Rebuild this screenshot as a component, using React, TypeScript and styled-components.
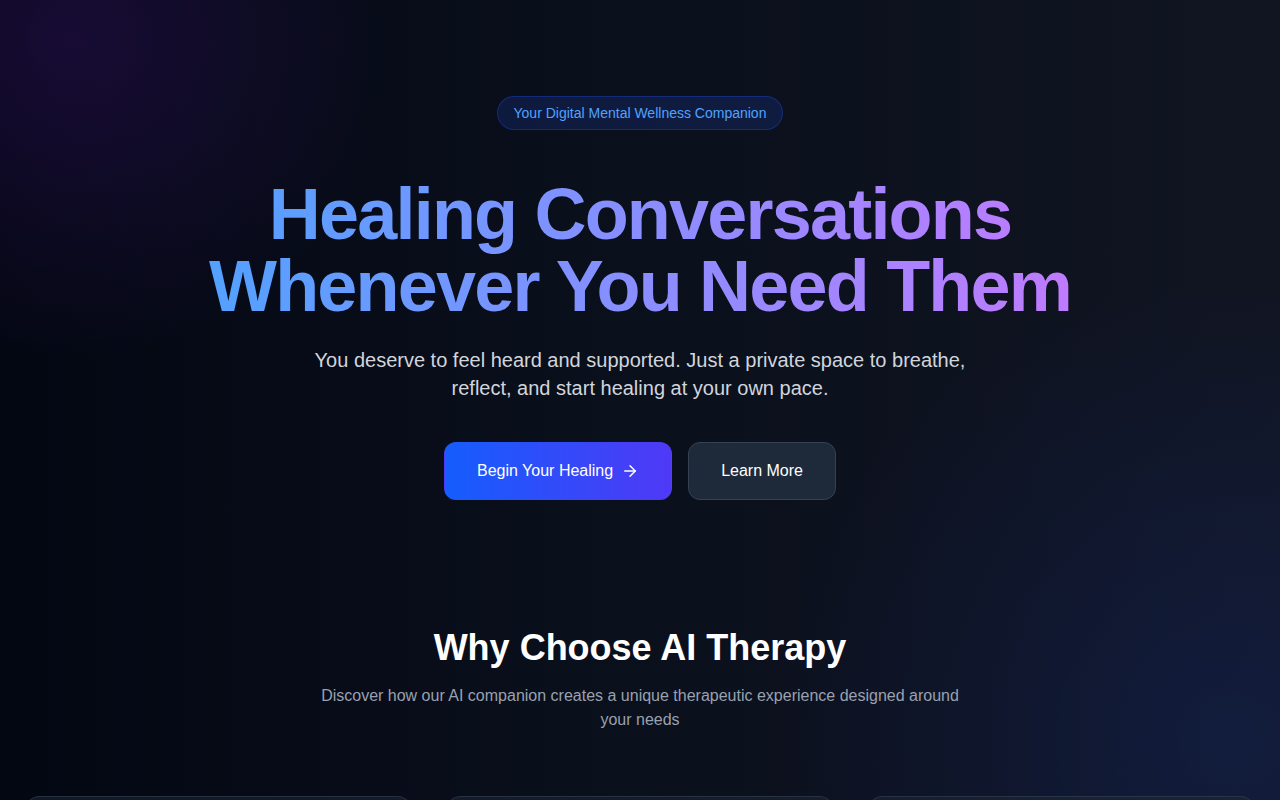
import React from 'react'
import styled, { createGlobalStyle } from 'styled-components'
import { ArrowRight, Clock, Shield, Heart } from 'lucide-react'

const GlobalStyle = createGlobalStyle`
  * {
    box-sizing: border-box;
  }
  body {
    margin: 0;
    font-family: "Liberation Sans", Arial, sans-serif;
    background: #030712;
    color: #ffffff;
  }
`

const Page = styled.div`
  min-height: 100vh;
  background:
    radial-gradient(circle at 70px 40px, rgba(70, 20, 130, 0.3), rgba(70, 20, 130, 0) 320px),
    radial-gradient(circle at 1230px 740px, rgba(22, 50, 140, 0.26), rgba(22, 50, 140, 0) 460px),
    linear-gradient(to right, #030712 0%, #0a0f1c 45%, #111522 100%);
`

const Hero = styled.section`
  display: flex;
  flex-direction: column;
  align-items: center;
  text-align: center;
  padding: 96px 24px 0;
`

const Badge = styled.span`
  display: inline-block;
  padding: 6px 16px;
  font-size: 14px;
  line-height: 20px;
  color: #51a2ff;
  background: rgba(28, 57, 142, 0.3);
  border: 1px solid rgba(25, 60, 184, 0.5);
  border-radius: 9999px;
  margin-bottom: 48px;
`

const Title = styled.h1`
  width: 100%;
  max-width: 896px;
  margin: 0 0 24px;
  font-size: 72px;
  line-height: 72px;
  font-weight: 700;
  letter-spacing: -0.025em;
  background: linear-gradient(to right, #51a2ff, #c27aff);
  -webkit-background-clip: text;
  background-clip: text;
  color: transparent;
`

const Lead = styled.p`
  max-width: 672px;
  margin: 0 0 40px;
  font-size: 20px;
  line-height: 28px;
  color: #d1d5dc;
`

const Actions = styled.div`
  display: flex;
  gap: 16px;
`

const Button = styled.button<{ $primary?: boolean }>`
  display: inline-flex;
  align-items: center;
  gap: 8px;
  padding: 16px 32px;
  font-family: inherit;
  font-size: 16px;
  line-height: 24px;
  color: #ffffff;
  border-radius: 12px;
  cursor: pointer;
  border: 1px solid ${({ $primary }) => ($primary ? 'transparent' : '#364153')};
  background: ${({ $primary }) =>
    $primary ? 'linear-gradient(to right, #155dfc, #4f39f6)' : '#1e2939'};
`

const Features = styled.section`
  display: flex;
  flex-direction: column;
  align-items: center;
  text-align: center;
  padding: 128px 0 96px;
`

const SectionTitle = styled.h2`
  margin: 0 0 16px;
  font-size: 36px;
  line-height: 40px;
  font-weight: 700;
  color: #ffffff;
`

const SectionText = styled.p`
  max-width: 672px;
  margin: 0 0 64px;
  font-size: 16px;
  line-height: 24px;
  color: #99a1af;
`

const Grid = styled.div`
  width: 100%;
  max-width: 1280px;
  padding: 0 24px;
  display: grid;
  grid-template-columns: repeat(3, 1fr);
  gap: 32px;
`

const Card = styled.div`
  text-align: left;
  padding: 32px;
  border-radius: 16px;
  background: rgba(30, 41, 57, 0.5);
  border: 1px solid rgba(54, 65, 83, 0.6);
`

const IconBox = styled.div<{ $color: string }>`
  width: 48px;
  height: 48px;
  border-radius: 12px;
  display: flex;
  align-items: center;
  justify-content: center;
  margin-bottom: 20px;
  color: ${({ $color }) => $color};
  background: ${({ $color }) => $color}22;
`

const CardTitle = styled.h3`
  margin: 0 0 8px;
  font-size: 20px;
  line-height: 28px;
  font-weight: 600;
`

const CardText = styled.p`
  margin: 0;
  font-size: 15px;
  line-height: 24px;
  color: #99a1af;
`

const features = [
  {
    icon: Clock,
    color: '#51a2ff',
    title: '24/7 Availability',
    text: 'Talk whenever you need support, day or night, without waiting for an appointment.'
  },
  {
    icon: Shield,
    color: '#7c86ff',
    title: 'Private & Secure',
    text: 'Your conversations stay confidential in a safe space built around your privacy.'
  },
  {
    icon: Heart,
    color: '#c27aff',
    title: 'Personalized Care',
    text: 'Guidance that adapts to your mood, your goals and the pace that feels right.'
  }
]

export default function App() {
  return (
    <Page>
      <GlobalStyle />
      <Hero>
        <Badge>Your Digital Mental Wellness Companion</Badge>
        <Title>
          Healing Conversations
          <br />
          Whenever You Need Them
        </Title>
        <Lead>
          You deserve to feel heard and supported. Just a private space to breathe, reflect, and
          start healing at your own pace.
        </Lead>
        <Actions>
          <Button $primary>
            Begin Your Healing
            <ArrowRight size={18} />
          </Button>
          <Button>Learn More</Button>
        </Actions>
      </Hero>

      <Features>
        <SectionTitle>Why Choose AI Therapy</SectionTitle>
        <SectionText>
          Discover how our AI companion creates a unique therapeutic experience designed around
          your needs
        </SectionText>
        <Grid>
          {features.map(({ icon: Icon, color, title, text }) => (
            <Card key={title}>
              <IconBox $color={color}>
                <Icon size={24} />
              </IconBox>
              <CardTitle>{title}</CardTitle>
              <CardText>{text}</CardText>
            </Card>
          ))}
        </Grid>
      </Features>
    </Page>
  )
}
